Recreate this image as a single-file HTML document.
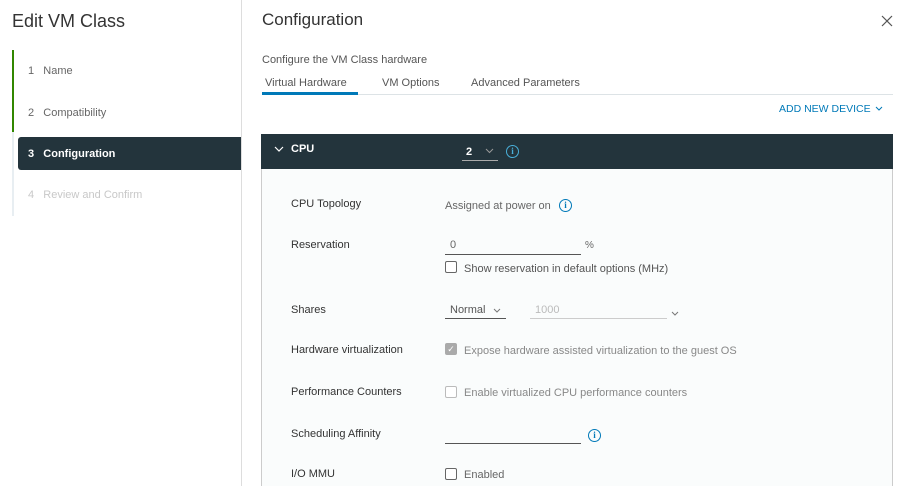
<!DOCTYPE html>
<html><head><style>
*{margin:0;padding:0;box-sizing:border-box}
body{width:902px;height:486px;overflow:hidden;background:#fff;font-family:"Liberation Sans",sans-serif;position:relative;color:#333}
.a{position:absolute;white-space:nowrap}
.lbl{position:absolute;left:291px;font-size:11px;color:#333}
.val{position:absolute;left:445px;font-size:11px;color:#666}
.cb{position:absolute;width:12px;height:12px;border:1px solid #666;border-radius:2px;background:#fff}
.info{position:absolute;width:13px;height:13px;border:1.5px solid #0079b8;border-radius:50%;color:#0079b8;font-size:9px;font-weight:bold;text-align:center;line-height:10px;font-family:"Liberation Serif",serif}
.ul{position:absolute;height:1px;background:#555}
svg.ch{position:absolute}
</style></head><body>
<div class="a" style="left:12px;top:11px;font-size:18px;color:#333">Edit VM Class</div>
<div class="a" style="left:241px;top:0;width:1px;height:486px;background:#ddd"></div>
<div class="a" style="left:12px;top:50px;width:2px;height:82px;background:#318700"></div>
<div class="a" style="left:12px;top:132px;width:2px;height:84px;background:#e8eef2"></div>
<div class="a" style="left:28px;top:65px;font-size:11px;color:#666">1&nbsp;&nbsp;&nbsp;Name</div>
<div class="a" style="left:28px;top:107px;font-size:11px;color:#666">2&nbsp;&nbsp;&nbsp;Compatibility</div>
<div class="a" style="left:18px;top:137px;width:223px;height:33px;background:#23343c;border-radius:3px 0 0 3px"></div>
<div class="a" style="left:28px;top:148px;font-size:11px;color:#fff;font-weight:bold">3&nbsp;&nbsp;&nbsp;Configuration</div>
<div class="a" style="left:28px;top:189px;font-size:11px;color:#c8c8c8">4&nbsp;&nbsp;&nbsp;Review and Confirm</div>

<div class="a" style="left:262px;top:10px;font-size:17px;color:#333">Configuration</div>
<svg class="ch" style="left:881px;top:15px" width="12" height="12"><path d="M1 1L11 11M11 1L1 11" stroke="#555" stroke-width="1.2"/></svg>
<div class="a" style="left:262px;top:54px;font-size:11px;color:#555">Configure the VM Class hardware</div>
<div class="a" style="left:265px;top:77px;font-size:11px;color:#555">Virtual Hardware</div>
<div class="a" style="left:382px;top:77px;font-size:11px;color:#555">VM Options</div>
<div class="a" style="left:471px;top:77px;font-size:11px;color:#555">Advanced Parameters</div>
<div class="a" style="left:262px;top:94px;width:631px;height:1px;background:#dde3e6"></div>
<div class="a" style="left:262px;top:92px;width:96px;height:3px;background:#0079b8"></div>
<div class="a" style="left:779px;top:103px;font-size:10.5px;color:#0079b8">ADD NEW DEVICE</div>
<svg class="ch" style="left:875px;top:106px" width="8" height="6"><path d="M1 1L4 4L7 1" stroke="#0079b8" fill="none"/></svg>

<div class="a" style="left:261px;top:134px;width:632px;height:352px;background:#fafcfc;border:1px solid #ccc;border-bottom:none"></div>
<div class="a" style="left:261px;top:134px;width:632px;height:35px;background:#23343c"></div>
<svg class="ch" style="left:274px;top:146px" width="10" height="7"><path d="M1 1L5 5L9 1" stroke="#fff" fill="none" stroke-width="1.2"/></svg>
<div class="a" style="left:291px;top:143px;font-size:11px;color:#fff;font-weight:bold">CPU</div>
<div class="a" style="left:466px;top:146px;font-size:11px;color:#fff;font-weight:bold">2</div>
<svg class="ch" style="left:485px;top:148px" width="9" height="6"><path d="M1 1L4.5 4.5L8 1" stroke="#999" fill="none"/></svg>
<div class="a" style="left:462px;top:160px;width:36px;height:1px;background:#aaa"></div>
<div class="info" style="left:506px;top:145px;background:transparent;color:#49afd9;border-color:#49afd9">i</div>

<div class="lbl" style="top:198px">CPU Topology</div>
<div class="val" style="top:200px">Assigned at power on</div>
<div class="info" style="left:559px;top:199px">i</div>

<div class="lbl" style="top:239px">Reservation</div>
<div class="val" style="left:450px;top:239px">0</div>
<div class="ul" style="left:445px;top:254px;width:136px"></div>
<div class="val" style="left:585px;top:240px;font-size:10px">%</div>
<div class="cb" style="left:445px;top:261px"></div>
<div class="val" style="left:464px;top:263px;color:#555">Show reservation in default options (MHz)</div>

<div class="lbl" style="top:304px">Shares</div>
<div class="val" style="left:450px;top:304px;color:#555">Normal</div>
<svg class="ch" style="left:493px;top:308px" width="8" height="5"><path d="M1 1L4 4L7 1" stroke="#777" fill="none"/></svg>
<div class="ul" style="left:445px;top:318px;width:61px"></div>
<div class="val" style="left:535px;top:304px;color:#bbb">1000</div>
<div class="ul" style="left:530px;top:318px;width:137px;background:#ccc"></div>
<svg class="ch" style="left:671px;top:311px" width="8" height="5"><path d="M1 1L4 4L7 1" stroke="#777" fill="none"/></svg>

<div class="lbl" style="top:344px">Hardware virtualization</div>
<div class="cb" style="left:445px;top:343px;background:#aaa;border-color:#aaa;color:#fff;font-size:9px;line-height:10px;text-align:center">✓</div>
<div class="val" style="left:464px;top:345px;color:#888">Expose hardware assisted virtualization to the guest OS</div>

<div class="lbl" style="top:386px">Performance Counters</div>
<div class="cb" style="left:445px;top:386px;border-color:#bbb"></div>
<div class="val" style="left:464px;top:387px;color:#888">Enable virtualized CPU performance counters</div>

<div class="lbl" style="top:428px">Scheduling Affinity</div>
<div class="ul" style="left:445px;top:443px;width:136px"></div>
<div class="info" style="left:588px;top:429px">i</div>

<div class="lbl" style="top:468px">I/O MMU</div>
<div class="cb" style="left:445px;top:468px"></div>
<div class="val" style="left:464px;top:469px;color:#666">Enabled</div>
</body></html>
